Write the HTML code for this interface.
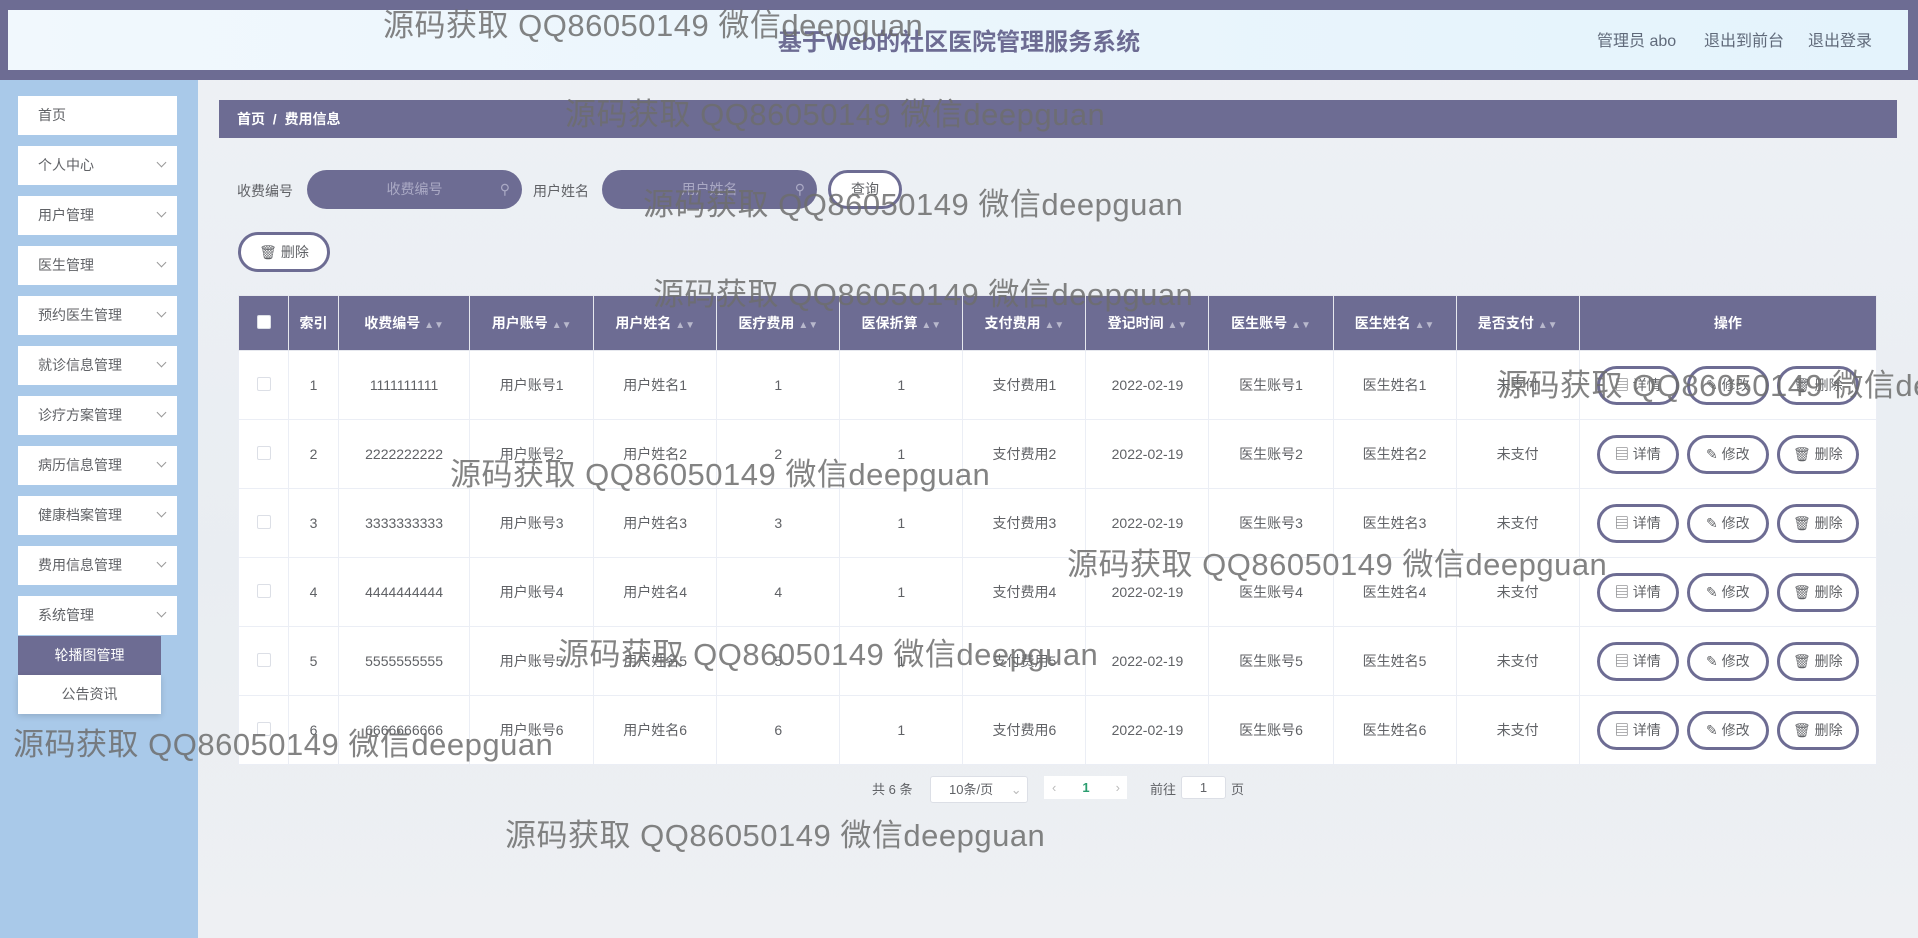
<!DOCTYPE html>
<html><head><meta charset="utf-8"><style>
*{margin:0;padding:0;box-sizing:border-box}
body{width:1918px;height:938px;overflow:hidden;position:relative;font-family:"Liberation Sans","Noto Sans CJK SC",sans-serif;background:linear-gradient(180deg,#eef1f5 0%,#e9edf2 60%,#eef0f3 100%);color:#606266}
.a{position:absolute}
.hdr{left:0;top:0;width:1918px;height:80px;background:#6d6c93}
.hp{left:8px;top:10px;width:1900px;height:60px;background:linear-gradient(90deg,#f1f8fd,#e4f3fc)}
.title{left:0;width:1918px;top:22px;text-align:center;font-size:24px;font-weight:bold;color:#6d6c93}
.rl{top:27px;font-size:16px;color:#606a7a}
.side{left:0;top:80px;width:198px;height:858px;background:#a9c9e9}
.mi{left:18px;width:159px;height:39px;background:#fff;font-size:14px;color:#606266;line-height:39px;padding-left:20px}
.mi i{position:absolute;right:12px;top:13px;width:7px;height:7px;border-right:1px solid #999;border-bottom:1px solid #999;transform:rotate(45deg)}
.bc{left:219px;top:100px;width:1678px;height:38px;background:#6d6c93;color:#fff;font-size:14px;font-weight:bold;line-height:38px;padding-left:18px}
.lab{font-size:14px;color:#606266}
.inp{height:39px;border-radius:20px;background:#6d6c93;color:#aaa9c4;font-size:14px;text-align:center;line-height:39px}
.ob{border:3px solid #6d6c93;border-radius:20px;background:#fff;font-size:14px;color:#606266;text-align:center}
table{position:absolute;left:238px;top:295px;border-collapse:collapse;table-layout:fixed;width:1639px;background:#fff}
th{background:#6d6c93;color:#fff;font-size:14px;height:55px;border:1px solid #e6e8ee;font-weight:bold}
td{height:69px;border:1px solid #ebeef5;text-align:center;font-size:14px;color:#606266}
.ar{color:#b8b8cc;font-size:10px}
.cb{display:inline-block;width:14px;height:14px;border:1px solid #dcdfe6;border-radius:2px;background:#fff}
.bt{display:inline-block;width:82px;height:39px;border:3px solid #6d6c93;border-radius:20px;line-height:33px;font-size:14px;color:#606266;margin:0 4px}
.wm{font-size:31px;color:#6e6e6e;white-space:nowrap;opacity:.85;letter-spacing:.5px}
</style></head><body>
<div class="a hdr"></div><div class="a hp"></div>
<div class="a title">基于Web的社区医院管理服务系统</div>
<div class="a rl" style="left:1597px">管理员 abo</div>
<div class="a rl" style="left:1704px">退出到前台</div>
<div class="a rl" style="left:1808px">退出登录</div>
<div class="a side"></div>
<div class="a mi" style="top:96px">首页</div>
<div class="a mi" style="top:146px">个人中心<i></i></div>
<div class="a mi" style="top:196px">用户管理<i></i></div>
<div class="a mi" style="top:246px">医生管理<i></i></div>
<div class="a mi" style="top:296px">预约医生管理<i></i></div>
<div class="a mi" style="top:346px">就诊信息管理<i></i></div>
<div class="a mi" style="top:396px">诊疗方案管理<i></i></div>
<div class="a mi" style="top:446px">病历信息管理<i></i></div>
<div class="a mi" style="top:496px">健康档案管理<i></i></div>
<div class="a mi" style="top:546px">费用信息管理<i></i></div>
<div class="a mi" style="top:596px">系统管理<i></i></div>
<div class="a" style="left:18px;top:636px;width:143px;height:39px;background:#6d6c93;color:#fff;font-size:14px;text-align:center;line-height:39px">轮播图管理</div>
<div class="a" style="left:18px;top:675px;width:143px;height:39px;background:#fff;color:#606266;font-size:14px;text-align:center;line-height:39px;box-shadow:0 2px 6px rgba(0,0,0,.15)">公告资讯</div>
<div class="a bc">首页 &nbsp;/&nbsp; 费用信息</div>
<div class="a lab" style="left:237px;top:181px">收费编号</div>
<div class="a inp" style="left:307px;top:170px;width:215px">收费编号<span style="position:absolute;right:12px;color:#aaa9c4">⚲</span></div>
<div class="a lab" style="left:533px;top:181px">用户姓名</div>
<div class="a inp" style="left:602px;top:170px;width:215px">用户姓名<span style="position:absolute;right:12px">⚲</span></div>
<div class="a ob" style="left:828px;top:170px;width:74px;height:39px;line-height:33px">查询</div>
<div class="a ob" style="left:238px;top:232px;width:92px;height:40px;line-height:34px">🗑 删除</div>
<table>
<colgroup><col style="width:50px"><col style="width:50px"><col style="width:131px"><col style="width:124px"><col style="width:123px"><col style="width:123px"><col style="width:123px"><col style="width:123px"><col style="width:123px"><col style="width:124px"><col style="width:123px"><col style="width:123px"><col style="width:297px"></colgroup>
<tr><th><span class="cb"></span></th><th>索引</th><th>收费编号 <span class="ar">▲▼</span></th><th>用户账号 <span class="ar">▲▼</span></th><th>用户姓名 <span class="ar">▲▼</span></th><th>医疗费用 <span class="ar">▲▼</span></th><th>医保折算 <span class="ar">▲▼</span></th><th>支付费用 <span class="ar">▲▼</span></th><th>登记时间 <span class="ar">▲▼</span></th><th>医生账号 <span class="ar">▲▼</span></th><th>医生姓名 <span class="ar">▲▼</span></th><th>是否支付 <span class="ar">▲▼</span></th><th>操作</th></tr>
<tr><td><span class="cb"></span></td><td>1</td><td>1111111111</td><td>用户账号1</td><td>用户姓名1</td><td>1</td><td>1</td><td>支付费用1</td><td>2022-02-19</td><td>医生账号1</td><td>医生姓名1</td><td>未支付</td><td><span class="bt">▤ 详情</span><span class="bt">✎ 修改</span><span class="bt">🗑 删除</span></td></tr>
<tr><td><span class="cb"></span></td><td>2</td><td>2222222222</td><td>用户账号2</td><td>用户姓名2</td><td>2</td><td>1</td><td>支付费用2</td><td>2022-02-19</td><td>医生账号2</td><td>医生姓名2</td><td>未支付</td><td><span class="bt">▤ 详情</span><span class="bt">✎ 修改</span><span class="bt">🗑 删除</span></td></tr>
<tr><td><span class="cb"></span></td><td>3</td><td>3333333333</td><td>用户账号3</td><td>用户姓名3</td><td>3</td><td>1</td><td>支付费用3</td><td>2022-02-19</td><td>医生账号3</td><td>医生姓名3</td><td>未支付</td><td><span class="bt">▤ 详情</span><span class="bt">✎ 修改</span><span class="bt">🗑 删除</span></td></tr>
<tr><td><span class="cb"></span></td><td>4</td><td>4444444444</td><td>用户账号4</td><td>用户姓名4</td><td>4</td><td>1</td><td>支付费用4</td><td>2022-02-19</td><td>医生账号4</td><td>医生姓名4</td><td>未支付</td><td><span class="bt">▤ 详情</span><span class="bt">✎ 修改</span><span class="bt">🗑 删除</span></td></tr>
<tr><td><span class="cb"></span></td><td>5</td><td>5555555555</td><td>用户账号5</td><td>用户姓名5</td><td>5</td><td>1</td><td>支付费用5</td><td>2022-02-19</td><td>医生账号5</td><td>医生姓名5</td><td>未支付</td><td><span class="bt">▤ 详情</span><span class="bt">✎ 修改</span><span class="bt">🗑 删除</span></td></tr>
<tr><td><span class="cb"></span></td><td>6</td><td>6666666666</td><td>用户账号6</td><td>用户姓名6</td><td>6</td><td>1</td><td>支付费用6</td><td>2022-02-19</td><td>医生账号6</td><td>医生姓名6</td><td>未支付</td><td><span class="bt">▤ 详情</span><span class="bt">✎ 修改</span><span class="bt">🗑 删除</span></td></tr>
</table>
<div class="a" style="left:872px;top:779px;font-size:13px">共 6 条</div>
<div class="a" style="left:930px;top:776px;width:98px;height:27px;background:#fff;border:1px solid #dcdfe6;border-radius:3px;font-size:13px;line-height:25px;padding-left:18px">10条/页 <span style="color:#bbb;margin-left:14px">⌄</span></div>
<div class="a" style="left:1044px;top:776px;width:83px;height:23px;background:#fff;font-size:13px;line-height:23px"><span style="color:#bbb;margin-left:8px">‹</span><span style="color:#2a9d6f;font-weight:bold;margin-left:26px">1</span><span style="color:#bbb;margin-left:26px">›</span></div>
<div class="a" style="left:1150px;top:779px;font-size:13px">前往</div>
<div class="a" style="left:1181px;top:776px;width:45px;height:23px;background:#fff;border:1px solid #dcdfe6;border-radius:3px;font-size:13px;text-align:center;line-height:21px">1</div>
<div class="a" style="left:1231px;top:779px;font-size:13px">页</div>
<div class="a wm" style="left:383px;top:0px">源码获取 QQ86050149 微信deepguan</div>
<div class="a wm" style="left:565px;top:89px">源码获取 QQ86050149 微信deepguan</div>
<div class="a wm" style="left:643px;top:179px">源码获取 QQ86050149 微信deepguan</div>
<div class="a wm" style="left:653px;top:269px">源码获取 QQ86050149 微信deepguan</div>
<div class="a wm" style="left:1497px;top:360px">源码获取 QQ86050149 微信deepguan</div>
<div class="a wm" style="left:450px;top:449px">源码获取 QQ86050149 微信deepguan</div>
<div class="a wm" style="left:1067px;top:539px">源码获取 QQ86050149 微信deepguan</div>
<div class="a wm" style="left:558px;top:629px">源码获取 QQ86050149 微信deepguan</div>
<div class="a wm" style="left:13px;top:719px">源码获取 QQ86050149 微信deepguan</div>
<div class="a wm" style="left:505px;top:810px">源码获取 QQ86050149 微信deepguan</div>
</body></html>
